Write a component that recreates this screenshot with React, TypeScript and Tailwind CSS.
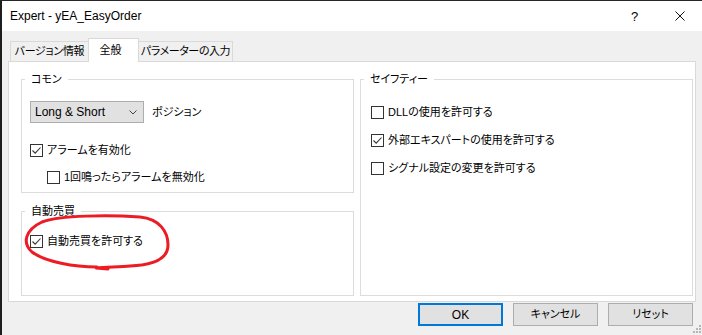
import React from 'react';

function Check({ checked }: { checked?: boolean }) {
  return (
    <span className="w-[13px] h-[13px] shrink-0 border border-[#333333] bg-white flex items-center justify-center">
      {checked && (
        <svg width="11" height="11" viewBox="0 0 11 11">
          <path d="M1.5 5.5 L4.2 8.2 L9.5 2.5" fill="none" stroke="#333333" strokeWidth="1.1" />
        </svg>
      )}
    </span>
  );
}

function CheckRow({ label, checked, className = '' }: { label: string; checked?: boolean; className?: string }) {
  return (
    <div className={`flex items-center gap-[4px] h-[16px] ${className}`}>
      <Check checked={checked} />
      <span>{label}</span>
    </div>
  );
}

function Group({ title, className = '', children }: { title: string; className?: string; children: React.ReactNode }) {
  return (
    <div className={`relative border border-[#dcdcdc] ${className}`}>
      <span className="absolute left-[3px] -top-[9px] px-[6px] bg-white leading-[16px]">{title}</span>
      {children}
    </div>
  );
}

export default function App() {
  return (
    <div className="w-[702px] h-[335px] overflow-hidden relative flex flex-col bg-[#f0f0f0] text-black text-[11px] leading-none whitespace-nowrap font-[family-name:'Liberation_Sans','Noto_Sans_CJK_JP',sans-serif] [font-feature-settings:'palt']">
      <div className="h-px bg-[#262626]" />
      <div className="flex flex-1">
        <div className="w-[2px] bg-[#1e1e1e]" />
        <div className="flex-1 flex flex-col">
          {/* Title bar */}
          <div className="h-[30px] bg-white flex items-center pl-[8px]">
            <span className="text-[12px]">Expert - yEA_EasyOrder</span>
            <div className="ml-auto w-[45px] text-center text-[13px]">?</div>
            <div className="w-[45px] flex justify-center">
              <svg width="10" height="10" viewBox="0 0 10 10">
                <path d="M0.5 0.5 L9.5 9.5 M9.5 0.5 L0.5 9.5" stroke="#111" strokeWidth="1" />
              </svg>
            </div>
          </div>

          {/* Body */}
          <div className="flex flex-col pl-[6px] pt-[7px]">
            {/* Tabs */}
            <div className="flex items-end h-[23px] ml-[2px]">
              <div className="w-[78px] h-[20px] border-l border-t border-[#d9d9d9] flex items-center justify-center tracking-[-0.3px]">バージョン情報</div>
              <div className="w-[51px] h-[24px] -mb-px relative z-10 bg-white border-l border-r border-t border-[#d9d9d9] flex items-center justify-center pr-[6px]">全般</div>
              <div className="w-[94px] h-[20px] border-r border-t border-[#d9d9d9] flex items-center justify-center tracking-[-0.4px]">パラメーターの入力</div>
            </div>

            {/* Panel */}
            <div className="w-[688px] h-[241px] bg-white border border-[#d9d9d9] flex gap-[6px] pl-[12px] pt-[17px]">
              <div className="w-[333px] flex flex-col gap-[18px]">
                <Group title="コモン" className="h-[114px] flex flex-col pl-[8px] pt-[21px]">
                  <div className="flex items-center gap-[8px]">
                    <div className="w-[114px] h-[22px] bg-[#e1e1e1] border border-[#adadad] flex items-center pl-[4px] pr-[6px] text-[12px]">
                      <span>Long &amp; Short</span>
                      <svg className="ml-auto" width="8" height="5" viewBox="0 0 8 5">
                        <path d="M0.5 0.5 L4 4 L7.5 0.5" fill="none" stroke="#444" strokeWidth="1" />
                      </svg>
                    </div>
                    <span>ポジション</span>
                  </div>
                  <CheckRow label="アラームを有効化" checked className="mt-[19px]" />
                  <CheckRow label="1回鳴ったらアラームを無効化" className="mt-[11px] pl-[17px]" />
                </Group>
                <Group title="自動売買" className="h-[85px] flex flex-col pl-[8px] pt-[21px]">
                  <CheckRow label="自動売買を許可する" checked />
                </Group>
              </div>
              <Group title="セイフティー" className="w-[333px] h-[217px] flex flex-col gap-[12px] pl-[10px] pt-[24px]">
                <CheckRow label="DLLの使用を許可する" />
                <CheckRow label="外部エキスパートの使用を許可する" checked />
                <CheckRow label="シグナル設定の変更を許可する" />
              </Group>
            </div>

            {/* Buttons */}
            <div className="flex justify-end gap-[10px] pr-[9px] mt-[1px]">
              <button className="w-[85px] h-[23px] bg-[#e1e1e1] border-2 border-[#0078d7] flex items-center justify-center text-[12px]">OK</button>
              <button className="w-[85px] h-[23px] bg-[#e1e1e1] border border-[#adadad] flex items-center justify-center">キャンセル</button>
              <button className="w-[85px] h-[23px] bg-[#e1e1e1] border border-[#adadad] flex items-center justify-center">リセット</button>
            </div>
          </div>
        </div>
      </div>

      {/* Size grip */}
      <svg className="absolute right-[1px] bottom-[2px]" width="8" height="8" viewBox="0 0 8 8">
        <g fill="#b5b5b5">
          <rect x="6" y="0" width="2" height="2" />
          <rect x="3" y="3" width="2" height="2" />
          <rect x="6" y="3" width="2" height="2" />
          <rect x="0" y="6" width="2" height="2" />
          <rect x="3" y="6" width="2" height="2" />
          <rect x="6" y="6" width="2" height="2" />
        </g>
      </svg>

      {/* Red hand-drawn annotation */}
      <svg className="absolute left-0 top-0 pointer-events-none" width="702" height="335" viewBox="0 0 702 335">
        <path
          d="M97 267 C75 267 45 262 32 252 C22 243 25 230 42 222 C60 215 110 215 140 217 C160 219 168 232 168 245 C168 258 155 265 130 266 C120 267 108 267 96 268 L108 269"
          fill="none"
          stroke="#ec1c24"
          strokeWidth="3"
          strokeLinecap="round"
          strokeLinejoin="round"
        />
      </svg>
    </div>
  );
}
